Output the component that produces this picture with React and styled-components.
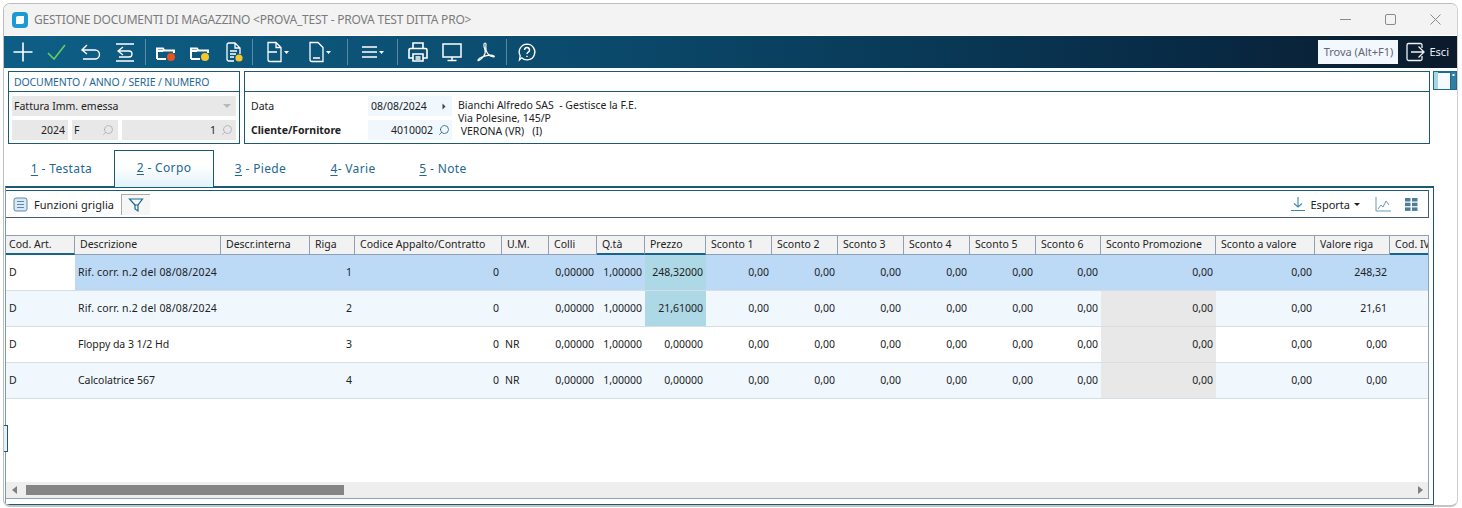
import React from "react";
import styled, { createGlobalStyle } from "styled-components";
import { Search } from "lucide-react";

const Global = createGlobalStyle`
	html, body { margin: 0; padding: 0; background: #fff; }
	body { width: 1462px; height: 508px; overflow: hidden; font-family: "Noto Sans", "Liberation Sans", sans-serif; font-size: 11px; color: #222; }
`;

const Window = styled.div`
	position: relative;
	box-sizing: border-box;
	width: 1455px;
	height: 504px;
	margin: 3px 0 0 3px;
	border: 1px solid #bdbdbd;
	border-right-color: #cfcfcf;
	border-bottom: 2px solid #c4c4c4;
	border-radius: 7px;
	background: #fff;
	display: flex;
	flex-direction: column;
	overflow: hidden;
`;

const TitleBar = styled.div`
	height: 31px;
	flex: none;
	background: #f3f3f3;
	display: flex;
	align-items: center;
	padding: 0 5px 0 8px;
	gap: 6px;
	color: #7b7b7b;
	font-size: 12px;
`;

const TitleText = styled.span`
	flex: 1;
	letter-spacing: -0.22px;
`;

const WinButtons = styled.div`
	display: flex;
	align-items: center;
	gap: 34px;
	margin-right: 11px;
`;

const Toolbar = styled.div`
	height: 32px;
	flex: none;
	margin-top: 1px;
	display: flex;
	align-items: center;
	background: linear-gradient(90deg, #0d5e86 0%, #0c5478 22%, #0b4a6c 40%, #093a58 62%, #082a44 82%, #0b1a2c 100%);
	padding-left: 2px;
`;

const ToolIcon = styled.div`
	width: ${p => p.$w || 34}px;
	height: 32px;
	flex: none;
	display: flex;
	align-items: center;
	justify-content: center;
`;

const ToolSep = styled.div`
	width: 1px;
	height: 26px;
	flex: none;
	background: rgba(255, 255, 255, 0.32);
	margin: 0 ${p => p.$r}px 0 ${p => p.$l}px;
`;

const ToolRight = styled.div`
	margin-left: auto;
	display: flex;
	align-items: center;
	gap: 7px;
	padding-right: 8px;
`;

const FindBox = styled.div`
	width: 80px;
	height: 24px;
	background: #f2f8fd;
	color: #667;
	font-size: 11px;
	line-height: 24px;
	text-align: center;
`;

const ExitLabel = styled.span`
	color: #eef2f6;
	font-size: 11px;
	margin-left: 4px;
	position: relative;
	top: -1px;
`;

const ExitButton = styled.div`
	display: flex;
	align-items: center;
`;

const HeaderRow = styled.div`
	display: flex;
	height: 73px;
	margin: 3px 0 0 4px;
	flex: none;
`;

const Panel = styled.div`
	box-sizing: border-box;
	border: 1px solid #1c5a72;
	width: ${p => p.$w}px;
	margin-right: 4px;
	height: 73px;
	display: flex;
	flex-direction: column;
`;

const PanelTitle = styled.div`
	height: 20px;
	flex: none;
	box-sizing: border-box;
	border-bottom: 1px solid #1c5a72;
	color: #1f6a94;
	font-size: 10.5px;
	line-height: 20px;
	padding-left: 5px;
	letter-spacing: -0.13px;
`;

const DocBody = styled.div`
	padding: 4px 3px 0 3px;
	display: flex;
	flex-direction: column;
	gap: 4px;
`;

const Combo = styled.div`
	height: 20px;
	background: #e8e8e8;
	display: flex;
	align-items: center;
	justify-content: space-between;
	padding: 0 4px 0 2px;
	font-size: 10.5px;
`;

const Caret = styled.span`
	width: 0;
	height: 0;
	border-left: ${p => p.$s || 4}px solid transparent;
	border-right: ${p => p.$s || 4}px solid transparent;
	border-top: ${p => p.$s || 4}px solid ${p => p.$c || "#b8b8b8"};
	margin-right: 1px;
`;

const SideCaret = styled(Caret)`
	transform: rotate(-90deg);
	margin-right: 3px;
`;

const DocFields = styled.div`
	display: flex;
	gap: 4px;
`;

const DocField = styled.div`
	height: 20px;
	width: ${p => p.$w}px;
	background: #e8e8e8;
	display: flex;
	align-items: center;
	justify-content: ${p => (p.$left ? "space-between" : "flex-end")};
	padding: 0 ${p => p.$pr || 2}px 0 2px;
	box-sizing: border-box;
	gap: 5px;
	font-size: 10.5px;
`;

const InfoBody = styled.div`
	display: grid;
	grid-template-columns: 117px 84px auto;
	grid-template-rows: 20px 20px;
	padding: 4px 0 0 6px;
	row-gap: 4px;
	font-size: 10.5px;
`;

const InfoLabel = styled.div`
	display: flex;
	align-items: center;
	font-weight: ${p => (p.$bold ? 700 : 400)};
	color: #222;
`;

const InfoField = styled.div`
	background: #f0f8fe;
	display: flex;
	align-items: center;
	justify-content: ${p => (p.$spread ? "space-between" : "flex-end")};
	gap: 5px;
	padding: 0 2px 0 3px;
`;

const InfoAddress = styled.div`
	grid-column: 3;
	grid-row: 1 / span 2;
	padding: 3px 0 0 6px;
	line-height: 13px;
	white-space: pre;
`;

const Tabs = styled.div`
	display: flex;
	height: 36px;
	margin: 6px 0 0 1px;
	flex: none;
`;

const Tab = styled.div`
	box-sizing: border-box;
	width: ${p => p.$w}px;
	height: ${p => (p.$active ? 37 : 36)}px;
	text-align: center;
	text-indent: ${p => p.$indent || 0}px;
	line-height: ${p => (p.$active ? 33 : 38)}px;
	font-size: 12px;
	color: #24688e;
	letter-spacing: 0.35px;
	position: relative;
	z-index: 1;
	${p => p.$active && `
		border: 1px solid #1c5a72;
		border-bottom: 0;
		background: linear-gradient(#fff 40%, #e2f2fb);
	`}
	u { text-underline-offset: 2px; }
`;

const GridFrame = styled.div`
	box-sizing: border-box;
	flex: 1;
	margin: 0 23px 0 1px;
	border: 1px solid #1c5a72;
	border-top-width: 2px;
	border-left-color: #7d99ad;
	display: flex;
	flex-direction: column;
`;

const GridTools = styled.div`
	box-sizing: border-box;
	height: 28px;
	flex: none;
	margin: 2px 4px 0 0;
	border: 1px solid #47596a;
	border-width: 1px 1px 1px 0;
	border-top-color: #1c5a72;
	display: flex;
	align-items: center;
	padding-left: 7px;
`;

const ToolsLabel = styled.span`
	font-size: 11px;
	margin-left: 6px;
	margin-right: 7px;
	letter-spacing: 0.05px;
`;

const FilterButton = styled.div`
	width: 29px;
	height: 21px;
	display: flex;
	align-items: center;
	justify-content: center;
	background: #f6f6f6;
	border-left: 1px solid #aaa;
	border-top: 1px solid #aaa;
	box-sizing: border-box;
`;

const ToolsEnd = styled.div`
	margin-left: auto;
	display: flex;
	align-items: center;
	padding-right: 10px;
`;

const ExportGroup = styled.div`
	display: flex;
	align-items: center;
	margin-right: 14px;
`;

const ChartSlot = styled.div`
	display: flex;
	margin-right: 14px;
`;

const ExportLabel = styled.span`
	font-size: 11px;
	margin: 0 4px 0 5px;
`;

const GridArea = styled.div`
	box-sizing: border-box;
	flex: 1;
	margin: 17px 4px 5px 0;
	border-right: 1px solid #8da0b5;
	border-bottom: 1px solid #8da0b5;
	border-top: 1px solid #8da0b5;
	display: flex;
	flex-direction: column;
	min-height: 0;
`;

const TableClip = styled.div`
	flex: 1;
	overflow: hidden;
	min-height: 0;
`;

const Row = styled.div`
	display: flex;
	width: max-content;
`;

const HeadCell = styled.div`
	box-sizing: border-box;
	width: ${p => p.$w}px;
	height: 19px;
	flex: none;
	background: #f2f2f2;
	border-right: 1px solid #8da0b5;
	border-bottom: ${p => (p.$sorted ? "2px solid #17638c" : "1px solid #8da0b5")};
	font-size: 10.5px;
	line-height: 17px;
	padding-left: 5px;
	white-space: nowrap;
	overflow: hidden;
	color: #222;
	&:first-child { padding-left: 3px; }
`;

const Cell = styled.div`
	box-sizing: border-box;
	width: ${p => p.$w}px;
	height: 36px;
	flex: none;
	background: ${p => p.$bg};
	border-bottom: 1px solid #d5dde5;
	font-size: 10.5px;
	line-height: 34px;
	padding: 0 3px;
	text-align: ${p => (p.$right ? "right" : "left")};
	white-space: nowrap;
	letter-spacing: ${p => p.$spacing}px;
	&:first-child { padding-left: 3px; }
`;

const HScroll = styled.div`
	height: 16px;
	flex: none;
	background: #eeeeee;
	display: flex;
	align-items: center;
	position: relative;
`;

const ScrollThumb = styled.div`
	width: 318px;
	height: 10px;
	background: #858585;
	margin-left: 20px;
`;

const ArrowLeft = styled.span`
	position: absolute;
	left: 6px;
	border-top: 4px solid transparent;
	border-bottom: 4px solid transparent;
	border-right: 5px solid #808080;
`;

const ArrowRight = styled.span`
	position: absolute;
	right: 5px;
	border-top: 4px solid transparent;
	border-bottom: 4px solid transparent;
	border-left: 5px solid #808080;
`;

const EdgeHandle = styled.div`
	position: absolute;
	left: -3px;
	top: 421px;
	width: 5px;
	height: 25px;
	border: 1px solid #1c5a72;
	background: #e6f2f8;
`;

const SideToggle = styled.svg`
	flex: none;
	margin-left: -1px;
`;

const ICON = { fill: "none", stroke: "#fff", strokeWidth: 1.3 };

const IconBase = ({ w = 24, h = 24, children }) => (
	<svg width={w} height={h} viewBox={`0 0 ${w} ${h}`} {...ICON}>{children}</svg>
);

const Dropdown = () => <path d="M19 11h5l-2.500 3z" fill="#fff" stroke="none" />;

const FolderShape = () => <path d="M3 19V8.500h6l1.500 2H20V13M3 19h9M3.500 11h6" strokeWidth="2" />;

const tools = [
	<IconBase key="a"><path d="M12 2.500v19M2.500 12h19" strokeWidth="1.600" /></IconBase>,
	<IconBase key="b"><path d="M3 13l6 6L20 5" stroke="#5fd05f" strokeWidth="1.600" /></IconBase>,
	<IconBase key="c"><path d="M8 5L3 10l5 4M3 10h13a4.500 4.500 0 0 1 0 9H4" strokeWidth="1.400" /></IconBase>,
	<IconBase key="d"><path d="M3 4h18M3 21h18M10 7l-5 4 5 4M5 11h11a3 3 0 0 1 0 6H6" strokeWidth="1.300" /></IconBase>,
];

const tools2 = [
	<IconBase key="e"><FolderShape /><circle cx="17" cy="17" r="4" fill="#e8541f" stroke="none" /></IconBase>,
	<IconBase key="f"><FolderShape /><circle cx="17" cy="17" r="4" fill="#f6c62e" stroke="none" /></IconBase>,
	<IconBase key="g"><path d="M12 21H7a2 2 0 0 1-2-2V5a2 2 0 0 1 2-2h6l5 5v6M13 3v5h5M8 11h7M8 14h6M8 17h4" strokeWidth="1.300" /><circle cx="17" cy="18" r="3.600" fill="#f6c62e" stroke="none" /></IconBase>,
];

const tools3 = [
	<IconBase key="h"><path d="M3 2.500h8l5 5v14H5a2 2 0 0 1-2-2zM11 2.500v5h5M3 12h9" /><Dropdown /></IconBase>,
	<IconBase key="i"><path d="M3 2.500h8l5 5v14H5a2 2 0 0 1-2-2zM6 18h7" /><Dropdown /></IconBase>,
];

const MenuIcon = (
	<IconBase><path d="M2 7h15M2 12h15M2 17h15" /><Dropdown /></IconBase>
);

const tools4 = [
	<IconBase key="j"><path d="M7 9V3h10v6M7 18H3V10a1.500 1.500 0 0 1 1.500-1.500h15A1.500 1.500 0 0 1 21 10v8h-4M7 14h10v7H7zM9.500 17h5M9.500 19h5" strokeWidth="1.600" /></IconBase>,
	<IconBase key="k"><path d="M3 4h18v13H3zM12 17v3M7.500 20.500h9" strokeWidth="1.500" /></IconBase>,
	<IconBase key="l"><path d="M11 3c-1.500 0-1.500 3 0 7s-3 9-6 10.500c-2 1-1-2 3-3.500s10-2.500 12-1c1.500 1.200-3 1.500-6-2-2-2.500-2.500-6-2-9 .2-1.400-.5-2-1-2z" strokeWidth="1.200" /></IconBase>,
];

const HelpIcon = (
	<svg width="20" height="20" viewBox="0 0 24 24" {...ICON}>
		<path d="M12 2.500a9.500 9.500 0 1 1-6.500 16.500L3 21.500l.8-5A9.500 9.500 0 0 1 12 2.500z" strokeWidth="1.600" />
		<path d="M9 9.500a3 3 0 1 1 4.500 2.600c-1 .6-1.500 1.200-1.500 2.400M12 16.500v1.500" strokeWidth="1.800" />
	</svg>
);

const AppLogo = () => (
	<svg width="16" height="16" viewBox="0 0 16 16">
		<rect width="16" height="16" rx="4" fill="#1b9ad6" />
		<path d="M6 4h6v6a2 2 0 0 1-2 2H4V6a2 2 0 0 1 2-2z" fill="#fff" />
	</svg>
);

const ExitIcon = () => (
	<svg width="20" height="20" viewBox="0 0 20 20" fill="none" stroke="#f2f2f2" strokeWidth="1.300">
		<path d="M17 6V3a1.500 1.500 0 0 0-1.500-1.500h-12A1.500 1.500 0 0 0 2 3v14a1.500 1.500 0 0 0 1.500 1.500h12A1.500 1.500 0 0 0 17 17v-3" />
		<path d="M6 10h13M13.500 4.500L19 10l-5.500 5.500" />
	</svg>
);

const SideToggleIcon = () => (
	<SideToggle width="24" height="19" viewBox="0 0 24 19">
		<rect width="24" height="19" fill="#1c6a8e" />
		<rect x="1" y="1" width="4" height="17" fill="#a9d4e8" />
		<rect x="5" y="2" width="12" height="16" fill="#f4fafd" />
		<rect x="18" y="1" width="5" height="17" fill="#2f7fa4" />
		<rect x="19.500" y="3" width="2" height="2" fill="#fff" />
	</SideToggle>
);

const GridListIcon = () => (
	<svg width="15" height="15" viewBox="0 0 15 15" fill="#d9e8f3" stroke="#5d8aa6">
		<rect x="1" y="1" width="13" height="13" rx="2" />
		<path d="M4 4.500h7M4 7.500h7M4 10.500h7" />
	</svg>
);

const FilterIcon = () => (
	<svg width="16" height="16" viewBox="0 0 16 16" fill="none" stroke="#1c6a8e" strokeWidth="1.200">
		<path d="M1.500 2h13l-4.500 6v6l-3-2V8z" />
		<path d="M6 8h4" />
	</svg>
);

const DownloadIcon = () => (
	<svg width="16" height="16" viewBox="0 0 16 16" fill="none" stroke="#3f86ad" strokeWidth="1.100">
		<path d="M8 1v10M4 7.500L8 11l4-3.500M1 14.500h14" />
	</svg>
);

const ChartIcon = () => (
	<svg width="16" height="16" viewBox="0 0 16 16" fill="none" stroke="#6d9cb8" strokeWidth="1">
		<path d="M1 1v14h15" />
		<path d="M3 13l3-4 2 2 3-6 3 4" />
	</svg>
);

const TilesIcon = () => (
	<svg width="13" height="13" viewBox="0 0 13 13" fill="#4d7c96">
		<rect x="0" y="0" width="5.500" height="3.500" />
		<rect x="7" y="0" width="5.500" height="3.500" />
		<rect x="0" y="4.700" width="5.500" height="3.500" />
		<rect x="7" y="4.700" width="5.500" height="3.500" />
		<rect x="0" y="9.400" width="5.500" height="3.500" />
		<rect x="7" y="9.400" width="5.500" height="3.500" />
	</svg>
);

const SMALL_SEARCH = { size: 12, strokeWidth: 1.500, style: { transform: "scaleX(-1)" } };

const columns = [
	{ key: "cod", label: "Cod. Art.", w: 69, sorted: true },
	{ key: "desc", label: "Descrizione", w: 146 },
	{ key: "int", label: "Descr.interna", w: 89 },
	{ key: "riga", label: "Riga", w: 45, right: true },
	{ key: "app", label: "Codice Appalto/Contratto", w: 147, right: true },
	{ key: "um", label: "U.M.", w: 47 },
	{ key: "colli", label: "Colli", w: 48, right: true },
	{ key: "qta", label: "Q.tà", w: 48, right: true, sorted: true },
	{ key: "prezzo", label: "Prezzo", w: 61, right: true, sorted: true },
	{ key: "s1", label: "Sconto 1", w: 66, right: true },
	{ key: "s2", label: "Sconto 2", w: 66, right: true },
	{ key: "s3", label: "Sconto 3", w: 66, right: true },
	{ key: "s4", label: "Sconto 4", w: 66, right: true },
	{ key: "s5", label: "Sconto 5", w: 66, right: true },
	{ key: "s6", label: "Sconto 6", w: 65, right: true },
	{ key: "promo", label: "Sconto Promozione", w: 115, right: true },
	{ key: "val", label: "Sconto a valore", w: 99, right: true },
	{ key: "riga2", label: "Valore riga", w: 75, right: true },
	{ key: "iva", label: "Cod. IVA", w: 60, sorted: true },
];

const makeRow = (riga, desc, um, prezzo, valore) => ({
	cod: "D", desc, int: "", riga, app: "0", um, colli: "0,00000", qta: "1,00000", prezzo,
	s1: "0,00", s2: "0,00", s3: "0,00", s4: "0,00", s5: "0,00", s6: "0,00",
	promo: "0,00", val: "0,00", riga2: valore, iva: "",
});

const rows = [
	makeRow("1", "Rif. corr. n.2 del 08/08/2024", "", "248,32000", "248,32"),
	makeRow("2", "Rif. corr. n.2 del 08/08/2024", "", "21,61000", "21,61"),
	makeRow("3", "Floppy da 3 1/2 Hd", "NR", "0,00000", "0,00"),
	makeRow("4", "Calcolatrice 567", "NR", "0,00000", "0,00"),
];

const cellColor = ( rowIndex, key ) => {
	if ( rowIndex === 0 && key === "cod" ) return "#ffffff";
	if ( rowIndex < 2 && key === "prezzo" ) return "#add8e6";
	if ( rowIndex > 0 && key === "promo" ) return "#e8e8e8";
	if ( rowIndex === 0 ) return "#bcd9f6";
	return rowIndex % 2 ? "#f0f8fe" : "#ffffff";
};

const cellSpacing = ( rowIndex, key ) => {
	if ( key === "desc" && rowIndex < 2 ) return 0.18;
	return key === "desc" ? -0.05 : 0;
};

const tabs = [
	{ n: "1", rest: " - Testata", w: 109, indent: 4 },
	{ n: "2", rest: " - Corpo", w: 100, active: true },
	{ n: "3", rest: " - Piede", w: 93 },
	{ n: "4", rest: "- Varie", w: 92 },
	{ n: "5", rest: " - Note", w: 88 },
];

const App = () => (
	<>
		<Global />
		<Window>
			<TitleBar>
				<AppLogo />
				<TitleText>GESTIONE DOCUMENTI DI MAGAZZINO &lt;PROVA_TEST - PROVA TEST DITTA PRO&gt;</TitleText>
				<WinButtons>
					<svg width="11" height="11" viewBox="0 0 11 11" stroke="#8a8a8a"><path d="M0 5.500h11" /></svg>
					<svg width="11" height="11" viewBox="0 0 11 11" fill="none" stroke="#8a8a8a"><rect x="0.500" y="0.500" width="10" height="10" rx="1.500" /></svg>
					<svg width="11" height="11" viewBox="0 0 11 11" stroke="#8a8a8a"><path d="M0.500 0.500l10 10M10.500 0.500l-10 10" /></svg>
				</WinButtons>
			</TitleBar>
			<Toolbar>
				{tools.map(t => <ToolIcon key={t.key}>{t}</ToolIcon>)}
				<ToolSep $l={3} $r={3} />
				{tools2.map(t => <ToolIcon key={t.key}>{t}</ToolIcon>)}
				<ToolSep $l={1} $r={3} />
				{tools3.map(t => <ToolIcon $w={42} key={t.key}>{t}</ToolIcon>)}
				<ToolSep $l={7} $r={2} />
				<ToolIcon $w={44}>{MenuIcon}</ToolIcon>
				<ToolSep $l={3} $r={3} />
				{tools4.map(t => <ToolIcon key={t.key}>{t}</ToolIcon>)}
				<ToolSep $l={3} $r={3} />
				<ToolIcon>{HelpIcon}</ToolIcon>
				<ToolRight>
					<FindBox>Trova (Alt+F1)</FindBox>
					<ExitButton><ExitIcon /><ExitLabel>Esci</ExitLabel></ExitButton>
				</ToolRight>
			</Toolbar>
			<HeaderRow>
				<Panel $w={232}>
					<PanelTitle>DOCUMENTO / ANNO / SERIE / NUMERO</PanelTitle>
					<DocBody>
						<Combo>Fattura Imm. emessa<Caret /></Combo>
						<DocFields>
							<DocField $w={56} $pr={3}>2024</DocField>
							<DocField $w={46} $left $pr={4}>F<Search {...SMALL_SEARCH} color="#aaa" /></DocField>
							<DocField $w={114} $pr={3}>1<Search {...SMALL_SEARCH} color="#aaa" /></DocField>
						</DocFields>
					</DocBody>
				</Panel>
				<Panel $w={1187}>
					<PanelTitle />
					<InfoBody>
						<InfoLabel>Data</InfoLabel>
						<InfoField $spread>08/08/2024<SideCaret $s={3.500} $c="#444" /></InfoField>
						<InfoAddress>{"Bianchi Alfredo SAS  - Gestisce la F.E.\nVia Polesine, 145/P\n VERONA (VR)   (I)"}</InfoAddress>
						<InfoLabel $bold>Cliente/Fornitore</InfoLabel>
						<InfoField>4010002<Search {...SMALL_SEARCH} color="#1c5a72" /></InfoField>
					</InfoBody>
				</Panel>
				<SideToggleIcon />
			</HeaderRow>
			<Tabs>
				{tabs.map(t => (
					<Tab key={t.n} $w={t.w} $active={t.active} $indent={t.indent}><u>{t.n}</u>{t.rest}</Tab>
				))}
			</Tabs>
			<GridFrame>
				<GridTools>
					<GridListIcon />
					<ToolsLabel>Funzioni griglia</ToolsLabel>
					<FilterButton><FilterIcon /></FilterButton>
					<ToolsEnd>
						<ExportGroup>
							<DownloadIcon />
							<ExportLabel>Esporta</ExportLabel>
							<Caret $s={3} $c="#222" />
						</ExportGroup>
						<ChartSlot><ChartIcon /></ChartSlot>
						<TilesIcon />
					</ToolsEnd>
				</GridTools>
				<GridArea>
					<TableClip>
						<Row>
							{columns.map(c => (
								<HeadCell key={c.key} $w={c.w} $sorted={c.sorted}>{c.label}</HeadCell>
							))}
						</Row>
						{rows.map((row, i) => (
							<Row key={row.riga}>
								{columns.map(c => (
									<Cell key={c.key} $w={c.w} $right={c.right} $spacing={cellSpacing(i, c.key)} $bg={cellColor(i, c.key)}>{row[c.key]}</Cell>
								))}
							</Row>
						))}
					</TableClip>
					<HScroll>
						<ArrowLeft />
						<ScrollThumb />
						<ArrowRight />
					</HScroll>
				</GridArea>
			</GridFrame>
			<EdgeHandle />
		</Window>
	</>
);

export default App;
